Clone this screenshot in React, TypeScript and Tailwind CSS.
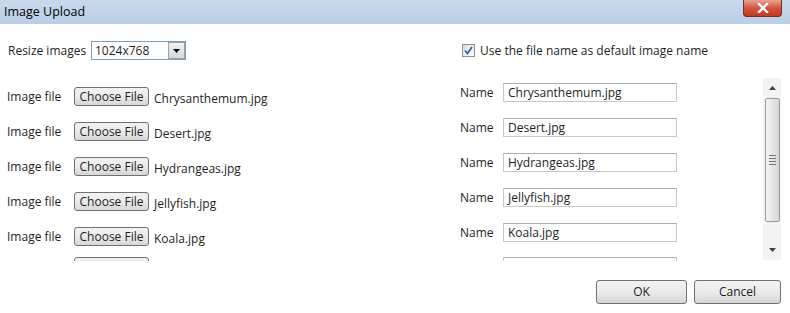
import React, { useState } from 'react'

const files = ['Chrysanthemum.jpg', 'Desert.jpg', 'Hydrangeas.jpg', 'Jellyfish.jpg', 'Koala.jpg']

const WinButton: React.FC<{ className?: string; children?: React.ReactNode }> = ({ className = '', children }) => (
  <button
    type="button"
    className={`flex items-center justify-center rounded-[3px] border border-[#707070] bg-gradient-to-b from-[#f2f2f2] via-[#ebebeb] to-[#d6d6d6] text-[12px] text-[#1e1e1e] leading-none ${className}`}
  >
    {children}
  </button>
)

const App: React.FC = () => {
  const [useFileName, setUseFileName] = useState(true)

  return (
    <div className="relative w-[790px] h-[313px] overflow-hidden bg-white font-['Open_Sans',sans-serif] text-[12px] text-[#1e1e1e]">
      {/* title bar */}
      <div className="h-[24px] bg-gradient-to-b from-[#c9d9ec] to-[#b9cee6] flex items-center px-[4px] text-[12.5px] text-black">
        Image Upload
      </div>
      <div className="absolute right-[8px] top-0 w-[39px] h-[17px] rounded-b-[4px] border border-t-0 border-[#7a2b22] bg-gradient-to-b from-[#e8a493] via-[#d2533e] to-[#c23a22] flex items-center justify-center">
        <svg width="12" height="10" viewBox="0 0 12 10">
          <path d="M2 1 L10 9 M10 1 L2 9" stroke="#fff" strokeWidth="2.4" strokeLinecap="square" />
        </svg>
      </div>

      {/* options row */}
      <div className="flex items-center justify-between h-[19px] mt-[17px]">
        <div className="flex items-center">
          <span className="ml-[8px] w-[83px]">Resize images</span>
          <div className="flex items-center w-[95px] h-[19px] border border-[#7f9db9] bg-white">
            <span className="flex-1 pl-[3px]">1024x768</span>
            <div className="w-[17px] h-[17px] border border-[#a0a0a0] bg-gradient-to-b from-[#f2f2f2] to-[#d9d9d9] flex items-center justify-center">
              <svg width="7" height="4" viewBox="0 0 7 4">
                <path d="M0 0 H7 L3.5 4 Z" fill="#000" />
              </svg>
            </div>
          </div>
        </div>
        <label className="flex items-center mr-[82px]">
          <span
            onClick={() => setUseFileName(!useFileName)}
            className="w-[13px] h-[13px] border border-[#8f8f8f] bg-gradient-to-br from-[#dcdcdc] to-[#ffffff] flex items-center justify-center"
          >
            {useFileName && (
              <svg width="9" height="9" viewBox="0 0 9 9">
                <path d="M1 4.5 L3.5 7.5 L8 1" stroke="#3a5fb0" strokeWidth="1.8" fill="none" />
              </svg>
            )}
          </span>
          <span className="ml-[5px]">Use the file name as default image name</span>
        </label>
      </div>

      {/* scrolling file list */}
      <div className="flex h-[183px] mt-[18px] overflow-hidden">
        <div className="w-[453px] flex flex-col gap-[16px] pt-[9px]">
          {files.map((f) => (
            <div key={f} className="flex items-start h-[19px]">
              <span className="ml-[7px] w-[67px] pt-[1px]">Image file</span>
              <WinButton className="w-[75px] h-[19px]">Choose File</WinButton>
              <span className="ml-[5px] pt-[3px]">{f}</span>
            </div>
          ))}
          <div className="flex items-start h-[19px] -mt-[5px]">
            <span className="w-[74px]" />
            <WinButton className="w-[75px] h-[19px]" />
          </div>
        </div>
        <div className="flex-1 flex flex-col gap-[16px] pt-[5px]">
          {files.map((f) => (
            <div key={f} className="flex items-center h-[19px]">
              <span className="ml-[7px] w-[43px]">Name</span>
              <div className="w-[174px] h-[19px] border border-[#c8c8c8] border-t-[#abadb3] flex items-center pl-[4px]">
                {f}
              </div>
            </div>
          ))}
          <div className="flex items-center h-[19px] -mt-[1px]">
            <span className="ml-[7px] w-[43px]" />
            <div className="w-[174px] h-[19px] border border-[#c8c8c8] border-t-[#abadb3]" />
          </div>
        </div>
        {/* scrollbar */}
        <div className="w-[18px] mr-[9px] h-[182px] bg-[#f3f3f3] flex flex-col items-center">
          <div className="h-[20px] flex items-center justify-center">
            <svg width="7" height="4" viewBox="0 0 7 4">
              <path d="M0 4 H7 L3.5 0 Z" fill="#404040" />
            </svg>
          </div>
          <div className="w-[15px] h-[124px] rounded-[2px] border border-[#9b9b9b] bg-gradient-to-r from-[#f4f4f4] via-[#e6e6e6] to-[#d5d5d5] flex flex-col items-center justify-center gap-[2px]">
            <div className="w-[7px] h-px bg-[#7a7a7a]" />
            <div className="w-[7px] h-px bg-[#7a7a7a]" />
            <div className="w-[7px] h-px bg-[#7a7a7a]" />
            <div className="w-[7px] h-px bg-[#7a7a7a]" />
          </div>
          <div className="flex-1 flex items-end justify-center pb-[8px]">
            <svg width="7" height="4" viewBox="0 0 7 4">
              <path d="M0 0 H7 L3.5 4 Z" fill="#404040" />
            </svg>
          </div>
        </div>
      </div>

      {/* footer */}
      <div className="flex justify-end gap-[7px] mt-[19px] mr-[9px]">
        <WinButton className="w-[91px] h-[24px]">OK</WinButton>
        <WinButton className="w-[87px] h-[24px]">Cancel</WinButton>
      </div>
    </div>
  )
}

export default App
